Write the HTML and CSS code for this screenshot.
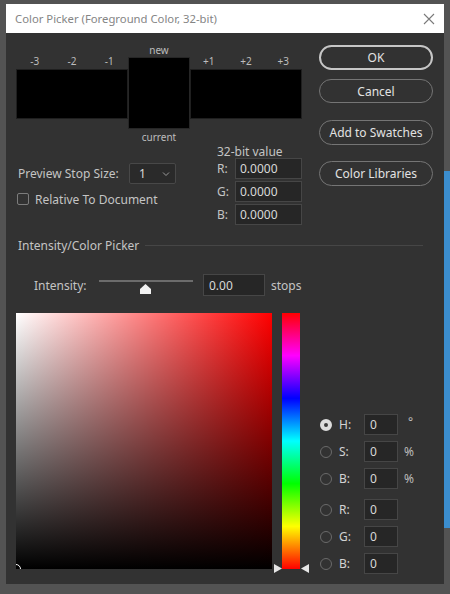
FILE: index.html
```html
<!DOCTYPE html>
<html>
<head>
<meta charset="utf-8">
<link rel="stylesheet" href="styles.css">
</head>
<body>
<div class="screen">
  <div class="window">
    <div class="titlebar">
      <span class="title">Color Picker (Foreground Color, 32-bit)</span>
      <svg class="close" width="12" height="12" viewBox="0 0 12 12"><path d="M1 1 L11 11 M11 1 L1 11" stroke="#7a7a7a" stroke-width="1.1" fill="none"/></svg>
    </div>
    <div class="content">
      <div class="top">
        <div class="left">
          <div class="swatches">
            <div class="side-sw">
              <div class="sw-labels"><span>-3</span><span>-2</span><span>-1</span></div>
              <div class="sw-box"></div>
            </div>
            <div class="center-sw">
              <div class="sw-label">new</div>
              <div class="center-box"></div>
              <div class="sw-label current">current</div>
            </div>
            <div class="side-sw">
              <div class="sw-labels"><span>+1</span><span>+2</span><span>+3</span></div>
              <div class="sw-box"></div>
            </div>
          </div>
          <div class="settings">
            <div class="stop-col">
              <div class="stop-row">
                <span class="stop-label">Preview Stop Size:</span>
                <div class="select"><span>1</span>
                  <svg width="8" height="6" viewBox="0 0 8 6"><path d="M1 1.5 L4 4.5 L7 1.5" stroke="#9a9a9a" stroke-width="1" fill="none"/></svg>
                </div>
              </div>
              <div class="check-row"><span class="checkbox"></span><span>Relative To Document</span></div>
            </div>
            <div class="bit-col">
              <div class="bit-title">32-bit value</div>
              <div class="bit-row"><span class="bit-label">R:</span><div class="input bit-input">0.0000</div></div>
              <div class="bit-row"><span class="bit-label">G:</span><div class="input bit-input">0.0000</div></div>
              <div class="bit-row"><span class="bit-label">B:</span><div class="input bit-input">0.0000</div></div>
            </div>
          </div>
        </div>
        <div class="buttons">
          <div class="btn primary">OK</div>
          <div class="btn b-cancel">Cancel</div>
          <div class="btn b-add">Add to Swatches</div>
          <div class="btn b-lib">Color Libraries</div>
        </div>
      </div>
      <div class="section-head"><span>Intensity/Color Picker</span><div class="rule"></div></div>
      <div class="intensity-row">
        <span class="int-label">Intensity:</span>
        <div class="slider">
          <div class="track"></div>
          <svg class="thumb" width="11" height="10" viewBox="0 0 11 10"><path d="M5.5 0 L11 5 L11 10 L0 10 L0 5 Z" fill="#f2f2f2"/></svg>
        </div>
        <div class="input int-input">0.00</div>
        <span class="stops">stops</span>
      </div>
      <div class="picker">
        <div class="field"><div class="marker"></div></div>
        <div class="hue-wrap">
          <div class="hue"></div>
          <svg class="arrow arrow-l" width="8" height="9" viewBox="0 0 8 9"><path d="M0 0 L8 4.5 L0 9 Z" fill="#e6e6e6"/></svg>
          <svg class="arrow arrow-r" width="8" height="9" viewBox="0 0 8 9"><path d="M8 0 L0 4.5 L8 9 Z" fill="#e6e6e6"/></svg>
        </div>
        <div class="values">
          <div class="vrow"><span class="radio on"></span><span class="vlabel">H:</span><div class="input vinput">0</div><span class="unit deg">°</span></div>
          <div class="vrow"><span class="radio"></span><span class="vlabel">S:</span><div class="input vinput">0</div><span class="unit">%</span></div>
          <div class="vrow"><span class="radio"></span><span class="vlabel">B:</span><div class="input vinput">0</div><span class="unit">%</span></div>
          <div class="vrow gap"><span class="radio"></span><span class="vlabel">R:</span><div class="input vinput">0</div></div>
          <div class="vrow"><span class="radio"></span><span class="vlabel">G:</span><div class="input vinput">0</div></div>
          <div class="vrow"><span class="radio"></span><span class="vlabel">B:</span><div class="input vinput">0</div></div>
        </div>
      </div>
    </div>
  </div>
  <div class="sidebar"><div class="blue"></div></div>
</div>
</body>
</html>
```
FILE: styles.css
```css
html, body {
  margin: 0;
  padding: 0;
  background: #535353;
  font-family: "Noto Sans", "Open Sans", sans-serif;
  font-size: 12px;
  color: #c4c4c4;
}
.screen {
  display: flex;
  width: 450px;
  height: 594px;
  overflow: hidden;
}
.window {
  margin-left: 6px;
  margin-top: 4px;
  width: 438px;
  height: 580px;
  flex-shrink: 0;
  display: flex;
  flex-direction: column;
}
.titlebar {
  height: 29px;
  background: #ffffff;
  display: flex;
  align-items: center;
  padding-left: 9px;
  padding-right: 9px;
}
.title {
  flex: 1;
  color: #858585;
  font-size: 11.3px;
}
.content {
  flex: 1;
  background: #323232;
  padding-left: 10px;
  padding-right: 11px;
  display: flex;
  flex-direction: column;
}
.top { display: flex; }
.left { width: 286px; flex-shrink: 0; }
.swatches {
  display: flex;
  align-items: flex-start;
  margin-top: 11px;
}
.side-sw {
  width: 112px;
  margin-top: 11px;
}
.sw-labels {
  display: flex;
  height: 14px;
  font-size: 10px;
  line-height: 12px;
  color: #bdbdbd;
}
.sw-labels span { flex: 1; text-align: center; }
.sw-box {
  height: 50px;
  background: #000;
  box-sizing: border-box;
  border: 1px solid #1f1f1f;
}
.center-sw { width: 62px; }
.sw-label {
  height: 13px;
  font-size: 10px;
  line-height: 12px;
  text-align: center;
  color: #bdbdbd;
}
.sw-label.current { height: 15px; line-height: 16px; }
.center-box {
  height: 72px;
  background: #000;
  box-sizing: border-box;
  border: 1px solid #262626;
}
.settings { display: flex; }
.stop-col { width: 201px; }
.stop-row {
  display: flex;
  align-items: center;
  margin-top: 19px;
  height: 21px;
}
.stop-label { width: 111px; padding-left: 2px; }
.select {
  width: 47px;
  height: 21px;
  box-sizing: border-box;
  border: 1px solid #484848;
  border-radius: 2px;
  background: #2a2a2a;
  display: flex;
  align-items: center;
  justify-content: space-between;
  padding: 0 5px 0 9px;
  color: #d8d8d8;
}
.check-row {
  display: flex;
  align-items: center;
  margin-top: 8px;
  height: 14px;
}
.checkbox {
  width: 12px;
  height: 12px;
  box-sizing: border-box;
  border: 1px solid #7c7c7c;
  border-radius: 2px;
  margin-left: 1px;
  margin-right: 6px;
}
.bit-col { width: 85px; }
.bit-title { margin-top: 1px; height: 13px; line-height: 13px; }
.bit-row {
  display: flex;
  align-items: center;
  height: 21px;
  margin-bottom: 2px;
}
.bit-label { width: 18px; }
.input {
  box-sizing: border-box;
  background: #262626;
  border: 1px solid #464646;
  color: #d8d8d8;
  display: flex;
  align-items: center;
}
.bit-input { width: 67px; height: 21px; padding-left: 4px; }
.buttons {
  margin-left: 17px;
  width: 114px;
  flex-shrink: 0;
  display: flex;
  flex-direction: column;
}
.btn {
  box-sizing: border-box;
  height: 25px;
  border-radius: 13px;
  border: 1px solid #757575;
  display: flex;
  align-items: center;
  justify-content: center;
  color: #e2e2e2;
}
.btn.primary { margin-top: 12px; border: 2px solid #c6c6c6; }
.b-cancel { margin-top: 9px; height: 24px; }
.b-add { margin-top: 17px; }
.b-lib { margin-top: 16px; }
.section-head {
  display: flex;
  align-items: center;
  margin-top: 11px;
  height: 14px;
  padding-left: 2px;
  margin-right: 10px;
}
.rule {
  flex: 1;
  height: 1px;
  background: #464646;
  margin-left: 6px;
}
.intensity-row {
  display: flex;
  align-items: center;
  margin-top: 22px;
  height: 22px;
}
.int-label { width: 65px; padding-left: 18px; }
.slider {
  position: relative;
  width: 94px;
  height: 22px;
}
.track {
  margin-top: 6px;
  height: 2px;
  background: #6c6c6c;
}
.thumb {
  position: absolute;
  left: 41px;
  top: 10px;
}
.int-input { margin-left: 10px; width: 62px; height: 22px; padding-left: 5px; }
.stops { margin-left: 6px; }
.picker {
  display: flex;
  margin-top: 17px;
}
.field {
  position: relative;
  width: 256px;
  height: 256px;
  overflow: hidden;
  background: linear-gradient(to top, #000, rgba(0,0,0,0)), linear-gradient(to right, #fff, #f00);
}
.marker {
  position: absolute;
  left: -5px;
  bottom: -5px;
  width: 10px;
  height: 10px;
  box-sizing: border-box;
  border: 1px solid #fff;
  border-radius: 50%;
}
.hue-wrap {
  position: relative;
  margin-left: 10px;
  width: 18px;
  height: 256px;
}
.hue {
  height: 256px;
  background: linear-gradient(to bottom, #f00 0%, #f0f 16.67%, #00f 33.33%, #0ff 50%, #0f0 66.67%, #ff0 83.33%, #f00 100%);
}
.arrow { position: absolute; bottom: -4px; }
.arrow-l { left: -8px; }
.arrow-r { right: -9px; }
.values {
  margin-left: 20px;
  padding-top: 101px;
}
.vrow {
  display: flex;
  align-items: center;
  height: 21px;
  margin-bottom: 6px;
}
.vrow.gap { margin-top: 10px; }
.radio {
  width: 12px;
  height: 12px;
  box-sizing: border-box;
  border: 1px solid #6a6a6a;
  border-radius: 50%;
  margin-right: 7px;
}
.radio.on {
  border: 4px solid #dcdcdc;
  background: #3a3a3a;
}
.vlabel { width: 25px; color: #d2d2d2; }
.vinput { width: 34px; height: 21px; padding-left: 5px; }
.unit { margin-left: 6px; color: #bdbdbd; }
.unit.deg { margin-left: 10px; margin-top: -6px; }
.sidebar { width: 6px; flex-shrink: 0; }
.blue {
  margin-top: 171px;
  height: 357px;
  background: #3b8dce;
}
```
